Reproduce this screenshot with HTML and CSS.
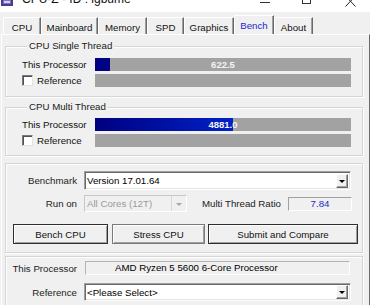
FILE: index.html
```html
<!DOCTYPE html>
<html>
<head>
<meta charset="utf-8">
<link rel="stylesheet" href="styles.css">
</head>
<body>
<div class="titlebar">
  <span class="appicon"><svg width="12" height="6" viewBox="0 0 12 6"><rect x="0" y="0" width="12" height="6" fill="#4a3c8c"/><rect x="2" y="0" width="8" height="4" fill="#7c6cc4"/><rect x="3" y="1" width="6" height="2" fill="#d8d0f0"/></svg></span>
  <span class="title">CPU-Z - ID : igbume</span>
  <span class="ctl-min"></span>
  <span class="ctl-max"></span>
  <span class="ctl-close"><svg width="11" height="7" viewBox="0 0 11 7"><path d="M0.5 -4 L10.5 6.5 M10.5 -4 L0.5 6.5" stroke="#222" stroke-width="1" fill="none"/></svg></span>
</div>
<div class="tabs">
  <div class="tab t-cpu">CPU</div>
  <div class="tab t-mb">Mainboard</div>
  <div class="tab t-mem">Memory</div>
  <div class="tab t-spd">SPD</div>
  <div class="tab t-gfx">Graphics</div>
  <div class="tab t-bench sel">Bench</div>
  <div class="tab t-about">About</div>
</div>
<div class="panel">
  <div class="group g1">
    <div class="legend">CPU Single Thread</div>
    <div class="brow first">
      <span class="blabel">This Processor</span>
      <div class="bar"><div class="fill" style="width:15px"></div><span class="val">622.5</span></div>
    </div>
    <div class="brow">
      <span class="blabel"><span class="chk"></span>Reference</span>
      <div class="bar"></div>
    </div>
  </div>
  <div class="group g2">
    <div class="legend">CPU Multi Thread</div>
    <div class="brow first">
      <span class="blabel">This Processor</span>
      <div class="bar"><div class="fill" style="width:138px"></div><span class="val">4881.0</span></div>
    </div>
    <div class="brow">
      <span class="blabel"><span class="chk"></span>Reference</span>
      <div class="bar"></div>
    </div>
  </div>
  <div class="group g3">
    <div class="frow r-bench">
      <span class="flabel">Benchmark</span>
      <div class="combo c-bench"><span class="ctext">Version 17.01.64</span><span class="dd"><i class="arrow"></i></span></div>
    </div>
    <div class="frow r-run">
      <span class="flabel">Run on</span>
      <div class="combo c-run disabled"><span class="ctext">All Cores (12T)</span><span class="dd"><i class="arrow"></i></span></div>
      <span class="ratio-label">Multi Thread Ratio</span>
      <div class="ratio">7.84</div>
    </div>
    <div class="btnrow">
      <div class="btn b-bench dflt">Bench CPU</div>
      <div class="btn b-stress">Stress CPU</div>
      <div class="btn b-submit dflt">Submit and Compare</div>
    </div>
  </div>
  <div class="group g4">
    <div class="frow r-proc">
      <span class="flabel">This Processor</span>
      <div class="field">AMD Ryzen 5 5600 6-Core Processor</div>
    </div>
    <div class="frow r-ref">
      <span class="flabel">Reference</span>
      <div class="combo c-ref"><span class="ctext">&lt;Please Select&gt;</span><span class="dd"><i class="arrow"></i></span></div>
    </div>
  </div>
</div>
</body>
</html>
```
FILE: styles.css
```css
html, body {
  margin: 0;
  padding: 0;
}
body {
  width: 370px;
  height: 305px;
  overflow: hidden;
  background: #f0f0f0;
  font-family: "Liberation Sans", Arial, sans-serif;
  font-size: 9.7px;
  color: #000;
}

/* title bar */
.titlebar {
  height: 12px;
  background: #fff;
  display: flex;
  align-items: flex-start;
  overflow: hidden;
}
.appicon {
  display: block;
  width: 12px;
  height: 6px;
  margin-left: 1px;
}
.appicon svg { display: block; }
.title {
  margin-left: 9px;
  margin-top: -7px;
  font-size: 12px;
  line-height: 13px;
  color: #111;
  white-space: nowrap;
}
.ctl-min {
  margin-left: auto;
  margin-top: 2px;
  width: 10px;
  height: 1px;
  background: #333;
}
.ctl-max {
  margin-left: 32px;
  margin-top: -5px;
  width: 9px;
  height: 9px;
  box-sizing: border-box;
  border: 1px solid #333;
}
.ctl-close {
  margin-left: 34px;
  margin-right: 14px;
  width: 11px;
  height: 7px;
}
.ctl-close svg { display: block; }

/* tabs */
.tabs {
  height: 22px;
  display: flex;
  align-items: flex-end;
  padding-left: 3px;
}
.tab {
  box-sizing: border-box;
  height: 17px;
  padding-top: 2px;
  border-top: 1px solid #fff;
  border-left: 1px solid #fff;
  border-right: 1px solid #696969;
  box-shadow: inset -1px 0 #a0a0a0;
  display: flex;
  align-items: center;
  justify-content: center;
  color: #111;
  white-space: nowrap;
}
.t-cpu { width: 38px; }
.t-mb { width: 57px; }
.t-mem { width: 49px; }
.t-spd { width: 37px; }
.t-gfx { width: 50px; }
.t-bench { width: 40px; }
.t-about { width: 39px; }
.tab.sel {
  height: 19px;
  padding-top: 0;
  color: #2424c8;
}

/* panel */
.panel {
  box-sizing: border-box;
  width: 369px;
  height: 271px;
  margin-left: 1px;
  border-top: 1px solid #fff;
  border-left: 1px solid #fff;
  border-right: 1px solid #696969;
  padding-left: 3px;
  padding-top: 11px;
}

.group {
  box-sizing: border-box;
  width: 358px;
  border: 1px solid #d5d5d5;
  box-shadow: inset 1px 1px #fff, 1px 1px #fff;
}
.legend {
  width: fit-content;
  height: 11px;
  line-height: 11px;
  margin: -7px 0 0 5px;
  padding: 0 2px;
  background: #f0f0f0;
  color: #1a1a1a;
  white-space: nowrap;
}

.g1 { padding: 0 0 9px 16px; }
.g2 { margin-top: 10px; padding: 0 0 8px 16px; }
.g1 .brow.first { margin-top: 7px; }
.g2 .brow.first { margin-top: 6px; }

.brow {
  display: flex;
  align-items: center;
  height: 13px;
  margin-top: 3px;
}
.blabel {
  width: 73px;
  display: flex;
  align-items: center;
  color: #111;
  white-space: nowrap;
}
.chk {
  box-sizing: border-box;
  width: 11px;
  height: 11px;
  margin-right: 4px;
  background: #fff;
  border: 1px solid;
  border-color: #7a7a7a #e3e3e3 #e3e3e3 #7a7a7a;
  box-shadow: inset 1px 1px #505050;
}
.bar {
  width: 256px;
  height: 13px;
  background: #a2a2a2;
  display: grid;
}
.fill, .val {
  grid-area: 1 / 1;
}
.fill {
  height: 13px;
  background: linear-gradient(to right, #000080, #0022c8 55%, #1a3ee8) 0 0 / 256px 100% no-repeat;
}
.val {
  justify-self: center;
  align-self: center;
  line-height: 13px;
  color: #f4f4f4;
  font-weight: bold;
  font-size: 9.5px;
}

/* group 3 */
.g3 {
  margin-top: 7px;
  padding: 7px 0 8px 0;
}
.frow {
  display: flex;
  align-items: center;
}
.flabel {
  width: 71px;
  text-align: right;
  margin-right: 7px;
  color: #222;
  white-space: nowrap;
}
.combo {
  box-sizing: border-box;
  display: flex;
  align-items: center;
  background: #fff;
  border: 1px solid;
  border-color: #a0a0a0 #fff #fff #a0a0a0;
  box-shadow: inset 1px 1px #696969, inset -1px -1px #e3e3e3;
}
.ctext {
  flex: 1;
  padding-left: 2px;
  white-space: nowrap;
}
.dd {
  box-sizing: border-box;
  width: 12px;
  height: 14px;
  margin-right: 2px;
  background: #f0f0f0;
  border: 1px solid;
  border-color: #fff #696969 #696969 #fff;
  box-shadow: inset -1px -1px #a0a0a0;
  display: flex;
  align-items: center;
  justify-content: center;
}
.arrow {
  width: 0;
  height: 0;
  border-left: 3px solid transparent;
  border-right: 3px solid transparent;
  border-top: 3px solid #000;
  margin-top: 1px;
}
.c-bench {
  width: 267px;
  height: 19px;
}
.r-run { margin-top: 5px; }
.c-run {
  width: 103px;
  height: 17px;
}
.combo.disabled {
  background: #f0f0f0;
  border-color: #c8c8c8 #fff #fff #c8c8c8;
  box-shadow: none;
  color: #9a9a9a;
}
.combo.disabled .dd {
  width: 15px;
  height: 15px;
  margin-right: 0;
  border: 0;
  border-left: 1px solid #d8d8d8;
  box-shadow: none;
}
.combo.disabled .arrow { border-top-color: #a8a8a8; }
.ratio-label {
  margin-left: 15px;
  width: 86px;
  color: #222;
  white-space: nowrap;
}
.ratio {
  box-sizing: border-box;
  width: 64px;
  height: 14px;
  line-height: 12px;
  text-align: center;
  color: #2a2ac8;
  border: 1px solid;
  border-color: #a0a0a0 #fff #fff #a0a0a0;
  background: #f0f0f0;
}

.btnrow {
  display: flex;
  margin-top: 12px;
  padding-left: 7px;
}
.btn {
  box-sizing: border-box;
  height: 20px;
  display: flex;
  align-items: center;
  justify-content: center;
  background: #f0f0f0;
  border: 1px solid #7a7a7a;
  box-shadow: inset 1px 1px #fff, inset -1px -1px #a0a0a0;
  color: #111;
  white-space: nowrap;
}
.btn.dflt { border-color: #2e2e2e; }
.b-bench { width: 95px; }
.b-stress { width: 93px; margin-left: 4px; }
.b-submit { width: 150px; margin-left: 3px; }

/* group 4 */
.g4 {
  margin-top: 3px;
  height: 60px;
  padding-top: 4px;
}
.field {
  box-sizing: border-box;
  width: 265px;
  height: 14px;
  line-height: 12px;
  margin-left: 1px;
  padding-left: 29px;
  border: 1px solid;
  border-color: #b4b4b4 #fff #fff #b4b4b4;
  background: #f0f0f0;
  white-space: nowrap;
}
.r-ref { margin-top: 8px; }
.c-ref {
  width: 267px;
  height: 18px;
}
```
